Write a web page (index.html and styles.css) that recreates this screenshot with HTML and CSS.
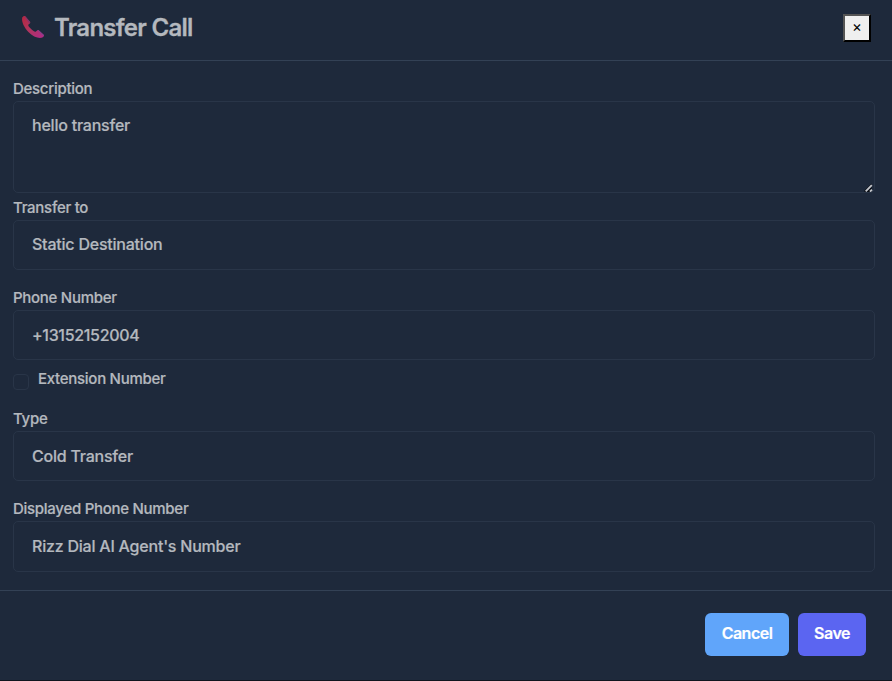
FILE: index.html
```html
<!DOCTYPE html>
<html lang="en">
<head>
<meta charset="utf-8">
<title>Transfer Call</title>
<link rel="stylesheet" href="styles.css">
</head>
<body>
<div class="modal">
  <header class="header">
    <svg class="phone" viewBox="0 0 24 24" width="24" height="24" aria-hidden="true">
      <defs>
        <linearGradient id="body" x1="0" y1="0" x2="1" y2="1">
          <stop offset="0" stop-color="#b4263f"/>
          <stop offset=".5" stop-color="#b03560"/>
          <stop offset="1" stop-color="#b02a88"/>
        </linearGradient>
      </defs>
      <path d="M1.2 2.6C2 1.2 3.3.5 4.2 1.2L9.2 6.9C9.6 7.8 8.7 8.6 7.7 9.2C6.7 10 7.5 11.4 9.4 13.3C11.8 15.7 13.6 17.2 14.7 16.8C15.6 16.4 16.4 14.7 17.4 15.1L22.9 20C23.5 21 22.3 22.3 20.6 22.8C16.6 23.5 11.6 21.3 7.4 17C3.2 12.8.3 6.7 1.2 2.6Z" fill="url(#body)"/>
      <path d="M3.2 1L4.2 1.2L9.2 6.9L8.4 8.7Z" fill="#86336c"/>
      <path d="M16.4 15.2L17.4 15.1L22.9 20L22.5 21.3Z" fill="#84408e"/>
    </svg>
    <h1 class="title">Transfer Call</h1>
    <button class="close" type="button" aria-label="Close">×</button>
  </header>
  <main class="form">
    <div class="field field-tight">
      <label class="label" for="description">Description</label>
      <div class="area-wrap">
        <textarea class="control area" id="description" spellcheck="false">hello transfer</textarea>
        <svg class="grip" viewBox="0 0 9 9" width="9" height="9" aria-hidden="true">
          <path d="M0 8L7.5.5V9H1Z" fill="#080c13"/>
          <path d="M1.7 8.3L7.8 2.2M6 8.6L8 6.6" stroke="#c3c6cc" stroke-width="1.9"/>
        </svg>
      </div>
    </div>
    <div class="field">
      <label class="label" for="to">Transfer to</label>
      <select class="control raised" id="to"><option>Static Destination</option></select>
    </div>
    <div class="field field-phone">
      <label class="label" for="phone">Phone Number</label>
      <input class="control control-phone" id="phone" type="text" value="+13152152004">
    </div>
    <label class="check"><input class="box" type="checkbox"><span>Extension Number</span></label>
    <div class="field">
      <label class="label" for="type">Type</label>
      <select class="control" id="type"><option>Cold Transfer</option></select>
    </div>
    <div class="field">
      <label class="label" for="displayed">Displayed Phone Number</label>
      <select class="control control-last raised" id="displayed"><option>Rizz Dial AI Agent's Number</option></select>
    </div>
  </main>
  <footer class="footer">
    <button class="btn cancel" type="button">Cancel</button>
    <button class="btn save" type="button">Save</button>
  </footer>
</div>
</body>
</html>
```
FILE: styles.css
```css
* { box-sizing: border-box; }
body {
  margin: 0;
  background: #1e293b;
  color: #b4b8be;
  font-family: Inter, sans-serif;
}
.modal {
  height: 681px;
  display: flex;
  flex-direction: column;
  border-bottom: 1px solid #10151e;
}
.header {
  height: 61px;
  flex: none;
  display: flex;
  align-items: flex-start;
  padding: 14px 21px 0;
  border-bottom: 1px solid #334155;
}
.phone { margin-top: 1px; }
.title {
  margin: 0 auto 0 9px;
  font-size: 24px;
  font-weight: 600;
  letter-spacing: -.72px;
  line-height: 27px;
  -webkit-text-stroke: .3px currentColor;
}
.close {
  width: 28px;
  height: 28px;
  padding: 0 0 3px;
  background: #efefef;
  border: 2px outset #000;
  color: #000;
  font: 400 15px/1 Inter, sans-serif;
}
.form { padding: 16px 17px 0 13px; flex: none; height: 529px; }
.field { display: flex; flex-direction: column; margin-bottom: 16px; }
.field-tight { margin-bottom: 3px; }
.field-phone { margin-bottom: 7px; }
.label, .check {
  font-size: 15px;
  font-weight: 500;
  letter-spacing: -.28px;
  line-height: 24px;
  -webkit-text-stroke: .2px currentColor;
}
.control {
  appearance: none;
  display: block;
  width: 100%;
  height: 50px;
  margin: 0;
  padding: 0 18px;
  border: 1px solid #293548;
  border-radius: 5px;
  background: transparent;
  color: inherit;
  font: 500 16px/24px Inter, sans-serif;
  letter-spacing: -.22px;
  outline: none;
  -webkit-text-stroke: .2px currentColor;
}
.control-phone { letter-spacing: -.33px; }
.raised { padding-bottom: 2px; }
.area-wrap { position: relative; height: 92px; }
.area { height: 92px; padding-top: 11px; resize: none; }
.grip { position: absolute; right: 2px; bottom: 1px; }
.control-last { height: 51px; }
.check { display: flex; gap: 9px; margin-bottom: 16px; }
.box {
  appearance: none;
  flex: none;
  width: 16px;
  height: 16px;
  margin: 7px 0 0;
  border: 1px solid #293548;
  border-radius: 4px;
}
.footer {
  flex: 1;
  display: flex;
  justify-content: flex-end;
  align-items: flex-start;
  gap: 9px;
  padding: 22px 26px 0;
  border-top: 1px solid #334155;
}
.btn {
  height: 43px;
  padding: 0 0 3px;
  border: 0;
  border-radius: 6px;
  color: #fff;
  font: 600 16px/24px Inter, sans-serif;
  letter-spacing: -.5px;
  -webkit-text-stroke: .2px currentColor;
}
.cancel { width: 84px; background: #60a5fa; }
.save { width: 68px; background: #5b65f1; }
```
